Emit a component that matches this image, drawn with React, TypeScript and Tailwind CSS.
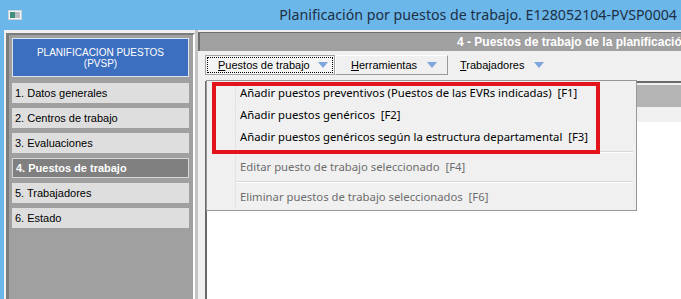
import React from 'react';

const Caret = () => (
  <svg width="10" height="6" viewBox="0 0 10 6" className="shrink-0">
    <path d="M0 0 H10 L5 6 Z" fill="#7fa6dc" />
  </svg>
);

const AppIcon = () => (
  <svg width="14" height="10" viewBox="0 0 14 10">
    <rect x="0.5" y="0.5" width="13" height="9" fill="#f4f4f4" stroke="#c9d3da" />
    <rect x="2" y="2" width="5" height="6" fill="#3f8f7c" />
    <rect x="7" y="2" width="5" height="6" fill="#b9bfc4" />
  </svg>
);

const steps = [
  '1. Datos generales',
  '2. Centros de trabajo',
  '3. Evaluaciones',
  '4. Puestos de trabajo',
  '5. Trabajadores',
  '6. Estado',
];

const menuTop = [
  'Añadir puestos preventivos (Puestos de las EVRs indicadas)  [F1]',
  'Añadir puestos genéricos  [F2]',
  'Añadir puestos genéricos según la estructura departamental  [F3]',
];

const App = () => {
  const active = 3;

  return (
    <div className="relative w-[681px] h-[299px] overflow-hidden bg-[#6cb7e9] flex flex-col">
      {/* barra de título */}
      <div className="h-[30px] shrink-0 flex items-center pl-[8px] pr-[4px]">
        <AppIcon />
        <div className="flex-1 text-right text-[14.2px] text-[#1c2f45] whitespace-nowrap font-['Noto_Sans',sans-serif]">
          Planificación por puestos de trabajo. E128052104-PVSP0004
        </div>
      </div>

      <div className="flex-1 flex ml-[4px] pl-[2px] bg-[#f0f0f0] font-['Liberation_Sans',Arial,sans-serif]">
        {/* panel izquierdo */}
        <div className="w-[189px] mt-[3px] border-l-[3px] border-t-2 border-[#7c7c7c] border-r-2 border-r-white bg-[#a0a0a0] pl-[3px] pr-[4px] pt-[3px] flex flex-col">
          <div className="h-[39px] border border-[#dbe4ef] bg-[#3d6fc0] text-white text-[10px] leading-[11px] flex flex-col items-center justify-center">
            <span>PLANIFICACION PUESTOS</span>
            <span>(PVSP)</span>
          </div>
          <div className="mt-[6px] flex flex-col gap-[5px]">
            {steps.map((s, i) => (
              <div
                key={s}
                className={
                  i === active
                    ? 'h-[20px] pl-[3px] flex items-center text-[11px] font-bold text-white bg-[#808080] border border-[#d6d6d6]'
                    : 'h-[20px] pl-[3px] flex items-center text-[11px] text-black bg-[#dedede]'
                }
              >
                {s}
              </div>
            ))}
          </div>
        </div>

        <div className="w-[3px] bg-[#c4c4c4]" />

        {/* panel derecho */}
        <div className="flex-1 flex flex-col min-w-0">
          <div className="mt-[2px] h-[19px] border-l-2 border-t border-[#6e6e6e] bg-[#a0a0a0] pl-[257px] flex items-center overflow-hidden">
            <span className="text-[12px] font-bold text-white whitespace-nowrap">
              4 - Puestos de trabajo de la planificación
            </span>
          </div>

          <div className="mt-[4px] ml-[7px] h-[20px] flex text-[11px] text-black">
            <div className="w-[130px] border border-[#a3a3a3] bg-[#f4f4f4] p-[1px]">
              <div className="h-full border border-dotted border-black pl-[10px] flex items-center gap-[8px]">
                <span><u>P</u>uestos de trabajo</span>
                <Caret />
              </div>
            </div>
            <div className="w-[113px] border-t border-l border-white border-r border-b border-r-[#9a9a9a] border-b-[#9a9a9a] bg-[#f0f0f0] pl-[15px] flex items-center gap-[10px]">
              <span><u>H</u>erramientas</span>
              <Caret />
            </div>
            <div className="pl-[12px] flex items-center gap-[10px]">
              <span><u>T</u>rabajadores</span>
              <Caret />
            </div>
          </div>

          <div className="mt-[6px] ml-[7px] flex-1 border-l-2 border-t-2 border-[#6a6a6a] flex flex-col">
            <div className="h-[2px] bg-[#f0f0f0]" />
            <div className="h-[22px] bg-[#b4b4b4]" />
            <div className="h-[15px] bg-[#f0f0f0]" />
            <div className="flex-1 bg-white" />
          </div>
        </div>
      </div>

      {/* menú desplegable */}
      <div className="absolute left-[206px] top-[80px] w-[431px] h-[131px] border border-[#979797] bg-[#f0f0f0] py-[2px] flex font-['Noto_Sans',sans-serif] text-[11.3px]">
        <div className="w-[28px] shrink-0" />
        <div className="flex-1 border-l border-[#e2e3e3] pr-[3px] flex flex-col">
          {menuTop.map((t) => (
            <div key={t} className="h-[22px] pl-[4px] flex items-center text-black whitespace-pre">
              {t}
            </div>
          ))}
          <div className="h-[8px] flex flex-col justify-center">
            <div className="h-px bg-[#d7d7d7]" />
            <div className="h-px bg-white" />
          </div>
          <div className="h-[22px] pl-[4px] flex items-center text-[#6d6d6d] whitespace-pre">
            Editar puesto de trabajo seleccionado  [F4]
          </div>
          <div className="h-[8px] flex flex-col justify-center">
            <div className="h-px bg-[#d7d7d7]" />
            <div className="h-px bg-white" />
          </div>
          <div className="h-[22px] pl-[4px] flex items-center text-[#6d6d6d] whitespace-pre">
            Eliminar puestos de trabajo seleccionados  [F6]
          </div>
        </div>
      </div>

      {/* recuadro rojo */}
      <div className="absolute left-[212px] top-[82px] w-[388px] h-[72px] border-[4px] border-[#e3131b]" />
    </div>
  );
};

export default App;
